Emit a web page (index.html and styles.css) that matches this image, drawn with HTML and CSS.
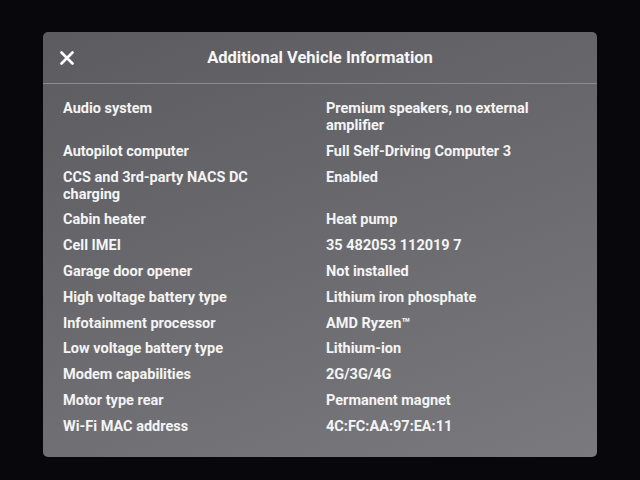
FILE: index.html
```html
<!DOCTYPE html>
<html lang="en">
<head>
  <meta charset="UTF-8" />
  <title>Additional Vehicle Information</title>
  <link rel="stylesheet" href="styles.css">
</head>
<body>
  <div class="painel">
    <div class="cabecalho">
      <span class="fechar">
        <svg width="14" height="14" viewBox="0 0 14 14">
          <path d="M1.5 1.5 L12.5 12.5 M12.5 1.5 L1.5 12.5" stroke="#fff" stroke-width="2.6" stroke-linecap="round"/>
        </svg>
      </span>
      <h1>Additional Vehicle Information</h1>
      <span></span>
    </div>

    <dl class="lista">
      <dt>Audio system</dt><dd>Premium speakers, no external amplifier</dd>
      <dt>Autopilot computer</dt><dd>Full Self-Driving Computer 3</dd>
      <dt>CCS and 3rd-party NACS DC charging</dt><dd>Enabled</dd>
      <dt>Cabin heater</dt><dd>Heat pump</dd>
      <dt>Cell IMEI</dt><dd>35 482053 112019 7</dd>
      <dt>Garage door opener</dt><dd>Not installed</dd>
      <dt>High voltage battery type</dt><dd>Lithium iron phosphate</dd>
      <dt>Infotainment processor</dt><dd>AMD Ryzen™</dd>
      <dt>Low voltage battery type</dt><dd>Lithium-ion</dd>
      <dt>Modem capabilities</dt><dd>2G/3G/4G</dd>
      <dt>Motor type rear</dt><dd>Permanent magnet</dd>
      <dt>Wi-Fi MAC address</dt><dd>4C:FC:AA:97:EA:11</dd>
    </dl>
  </div>
</body>
</html>
```

FILE: styles.css
```css
* {
  margin: 0;
  padding: 0;
  box-sizing: border-box;
}

body {
  background-color: #07070c;
  color: #f4f4f4;
  font-family: Roboto, 'Liberation Sans', sans-serif;
  padding: 32px 43px;
  height: 480px;
  overflow: hidden;
}

.painel {
  width: 554px;
  height: 425px;
  border-radius: 5px;
  background: linear-gradient(160deg, #5c5c60 0%, #69696d 45%, #7a7a7e 100%);
}

.cabecalho {
  height: 52px;
  display: grid;
  grid-template-columns: 1fr auto 1fr;
  align-items: center;
  padding: 0 17px;
  border-bottom: 1px solid #8c8c90;
}

.fechar {
  display: flex;
  align-items: center;
}

.cabecalho h1 {
  font-size: 16.5px;
  font-weight: 700;
  color: #f6f6f6;
}

.lista {
  display: grid;
  grid-template-columns: 263px 225px;
  row-gap: 8.8px;
  padding: 16px 20px 0;
  font-size: 14.5px;
  font-weight: 700;
  line-height: 17px;
}

.lista dt {
  padding-right: 40px;
}
```
